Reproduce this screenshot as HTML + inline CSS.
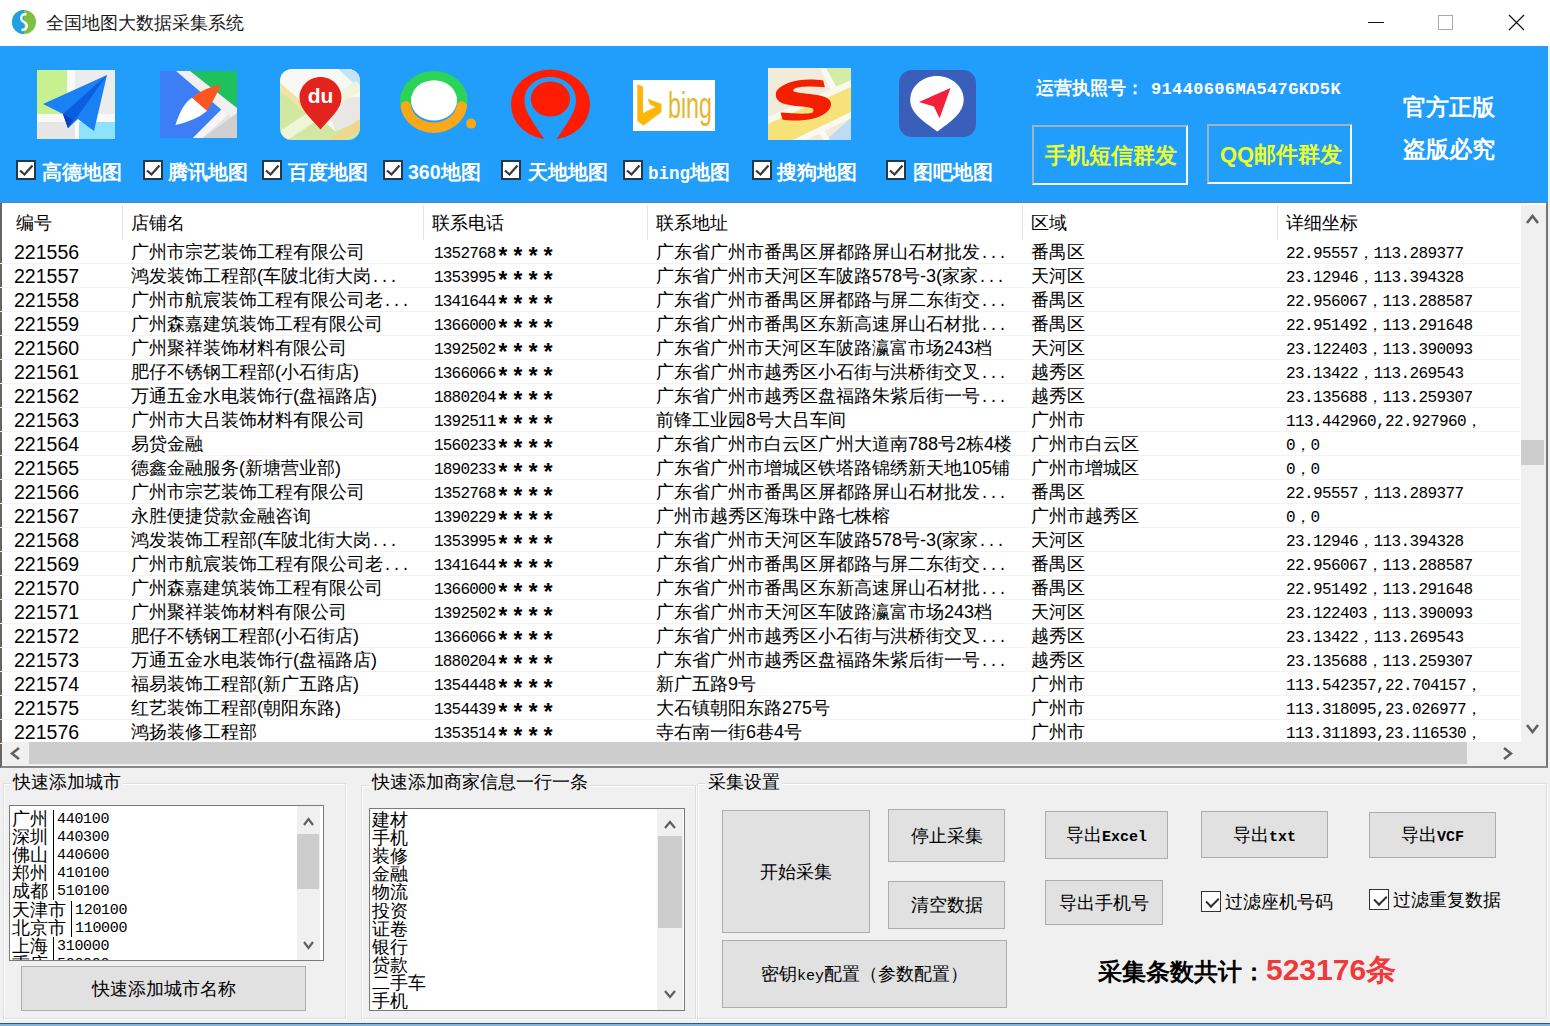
<!DOCTYPE html>
<html><head><meta charset="utf-8">
<style>
*{margin:0;padding:0;box-sizing:border-box}
html,body{width:1550px;height:1026px;overflow:hidden;background:#f0f0f0;font-family:"Liberation Sans",sans-serif;color:#000}
.a{position:absolute}
#title{left:0;top:0;width:1550px;height:46px;background:#fff}
#ttext{left:46px;top:12px;font-size:18px;line-height:22px;color:#1a1a1a;white-space:nowrap}
#blue{left:0;top:46px;width:1548px;height:157px;background:#219dfb}
#redge{left:1548px;top:46px;width:2px;height:157px;background:#e9eef8}
.lbl{position:absolute;top:160.5px;height:22px;font-size:19.5px;line-height:22px;font-weight:bold;color:#fff;white-space:nowrap}
.cb{position:absolute;top:160px;width:20px;height:19.5px;background:#fff;border:2px solid #24384c}
.cb svg{position:absolute;left:0;top:0}
/* table */
#tbl{left:0;top:203px;width:1548px;height:565px;background:#fff;border-left:2px solid #666;border-bottom:2px solid #888;border-right:2px solid #777;overflow:hidden}
.hd{position:absolute;top:9px;font-size:18px;line-height:22px;white-space:nowrap}
.hsep{position:absolute;top:2px;width:1px;height:35px;background:#e5e5e5}
.row{position:absolute;left:0;width:1520px;height:24px;border-bottom:1px solid #f3f3f3;white-space:nowrap}
.row span{position:absolute;top:1px;line-height:22px}
.c0{left:14px;font-size:19.5px}
.c1{left:131px;font-size:18px}
.c2{left:434px;font-size:16px;font-family:"Liberation Mono",monospace;top:3px!important;letter-spacing:-0.8px}
.c2 i{font-style:normal;font-size:23px;font-weight:bold;letter-spacing:1.3px;position:absolute;left:62px;top:5px;line-height:22px}
.row s{text-decoration:none;font-family:"Liberation Mono",monospace;font-size:15px;letter-spacing:0}
.c3{left:656px;font-size:18px}
.c4{left:1031px;font-size:18px}
.c5{left:1286px;font-size:16px;font-family:"Liberation Mono",monospace;top:3px!important;letter-spacing:-0.6px}
/* bottom */
.btn{position:absolute;background:#e1e1e1;border:1px solid #adadad;font-size:18px;display:flex;align-items:center;justify-content:center;white-space:nowrap}
.gb{position:absolute;border:1px solid #dedede;box-shadow:1px 1px 0 #fff, inset 1px 1px 0 #fff}
.gt{position:absolute;font-size:18px;line-height:22px;background:#f0f0f0;padding:0 2px;white-space:nowrap}
.li{position:absolute;left:2px;font-size:18px;line-height:18px;white-space:nowrap}
.li b{font-weight:normal;display:inline-block;width:1px;height:18px;background:#000;color:transparent;overflow:hidden;vertical-align:top;margin:0 3px 0 5px}
.li tt{font-family:"Liberation Mono",monospace;font-size:15px;letter-spacing:-0.3px;position:relative;top:-2px}
.cbw{width:20px;height:21px;border:1.5px solid #333;background:#fff}
.cbw:after{content:"";position:absolute;left:3px;top:2px;width:10px;height:6px;border-left:2.2px solid #333;border-bottom:2.2px solid #333;transform:rotate(-45deg) translate(-1px,3px)}
</style></head><body>
<div id="title" class="a">
  <svg class="a" style="left:11px;top:9px" width="26" height="26" viewBox="0 0 26 26">
    <circle cx="13" cy="13" r="12" fill="#7cc142"></circle>
    <path d="M13 1 A12 12 0 0 0 13 25 Z" fill="#1fa0e4"></path>
    <path d="M15.5 5 C9 5 9 11 13 13 C17 15 17 21 10.5 21" stroke="#fff" stroke-width="2.4" fill="none"></path>
  </svg>
  <div id="ttext" class="a" style="width: 198px; text-align: justify; text-align-last: justify;">全国地图大数据采集系统</div>
  <div class="a" style="left:1368px;top:22px;width:16px;height:1px;background:#111"></div>
  <div class="a" style="left:1438px;top:15px;width:15px;height:15px;border:1px solid #aaa"></div>
  <svg class="a" style="left:1508px;top:14px" width="17" height="17" viewBox="0 0 17 17"><path d="M1 1L16 16M16 1L1 16" stroke="#111" stroke-width="1.2"></path></svg>
</div>
<div id="blue" class="a"></div>
<div class="a" style="left:0;top:202px;width:1548px;height:1px;background:#5586b4"></div>
<div id="redge" class="a"></div>

<!-- toolbar icons -->
<svg class="a" style="left:37px;top:70px" width="78" height="69" viewBox="0 0 78 69">
  <rect width="78" height="69" fill="#ececec"></rect>
  <rect x="0" y="0" width="30" height="44" fill="#c7f090"></rect>
  <rect x="30" y="0" width="8" height="44" fill="#fafafa"></rect>
  <rect x="0" y="44" width="78" height="8" fill="#fafafa"></rect>
  <rect x="38" y="52" width="4" height="17" fill="#fafafa"></rect>
  <rect x="42" y="52" width="36" height="17" fill="#8ee2fb"></rect>
  <rect x="0" y="52" width="38" height="17" fill="#e6e6e6"></rect>
  <polygon points="6,34 70,5 57,61 41,49 31,58 26,44" fill="#1a80f6"></polygon>
  <polygon points="26,44 70,5 38,50 31,58" fill="#0b5ee0"></polygon>
  <polygon points="26,44 31,58 36,50" fill="#0a3fc0"></polygon>
</svg>
<svg class="a" style="left:160px;top:71px" width="77" height="67" viewBox="0 0 77 67">
  <rect width="77" height="67" fill="#3d7df6"></rect>
  <polygon points="30,0 77,0 77,37" fill="#1ec15c"></polygon>
  <polygon points="16,0 30,0 77,37 77,52 " fill="#f0f0f0"></polygon>
  <polygon points="77,52 77,67 33,67 62,38" fill="#e4e4e4"></polygon>
  <polygon points="77,42 77,67 43,67" fill="#cfcfcf"></polygon>
  <polygon points="62,38 68,44 42,67 33,67" fill="#f6f6f6"></polygon>
  <path d="M32 26.7 Q45 16 61 14 Q55 27 47 40 Z" fill="#ff5520"></path>
  <path d="M15.4 53.9 Q22 33 32 26.7 L47 40 Q35 50 15.4 53.9Z" fill="#ffffff"></path>
</svg>
<svg class="a" style="left:280px;top:69px" width="80" height="71" viewBox="0 0 80 71">
  <defs><clipPath id="bdc"><rect width="80" height="71" rx="12" ry="12"></rect></clipPath></defs>
  <g clip-path="url(#bdc)">
    <rect width="80" height="71" fill="#d2e8a2"></rect>
    <polygon points="0,0 80,0 80,52 55,62 30,40 0,14" fill="#f8f8f4"></polygon>
    <polygon points="0,14 30,40 27,45 0,22" fill="#f0e4a2"></polygon>
    <polygon points="45,30 80,28 80,52 55,62" fill="#e9e7e6"></polygon>
    <polygon points="58,0 80,0 80,20" fill="#c3e3f6"></polygon>
    <polygon points="0,62 76,12 80,16 80,22 8,71 0,71" fill="#eef5d8"></polygon>
    <polygon points="48,71 80,50 80,62 64,71" fill="#ecd98e"></polygon>
  </g>
  <path d="M40.5 8 C52 8 61.5 17 61.5 28.5 C61.5 40 52 47 40.5 60.5 C29 47 19.5 40 19.5 28.5 C19.5 17 29 8 40.5 8Z" fill="#e3241e"></path>
  <text x="40.5" y="34" font-family="Liberation Sans" font-weight="bold" font-size="21" fill="#fff" text-anchor="middle">du</text>
</svg>
<svg class="a" style="left:398px;top:69px" width="80" height="64" viewBox="0 0 80 64">
  <defs><clipPath id="c3t"><rect x="0" y="0" width="80" height="37"></rect></clipPath></defs>
  <ellipse cx="35.8" cy="31.6" rx="33.8" ry="29.6" fill="#2bd356" clip-path="url(#c3t)"></ellipse>
  <path d="M7.8 37.5 A28.3 24.8 0 0 0 63.8 37.5" stroke="#f9a817" stroke-width="10.5" stroke-linecap="round" fill="none"></path>
  <ellipse cx="36" cy="31.4" rx="23" ry="20.2" fill="#fff"></ellipse>
  <circle cx="73.1" cy="54.6" r="5" fill="#f9a817"></circle>
</svg>
<svg class="a" style="left:510px;top:69px" width="82" height="72" viewBox="0 0 82 72">
  <ellipse cx="40.5" cy="35.5" rx="39.5" ry="35" fill="#ff1c00"></ellipse>
  <path d="M40.3 8 C55 8 66 18 66 31 C66 42 60 50 46 71 L35 71 C21 50 14.5 42 14.5 31 C14.5 18 26 8 40.3 8Z" fill="#219dfb"></path>
  <ellipse cx="40.4" cy="30" rx="19.6" ry="17.6" fill="#ff1c00"></ellipse>
  <path d="M26 46 C30 55 34 62 36 71 L33 71 C29 60 25 52 22 46Z" fill="#ff1c00" opacity="0"></path>
</svg>
<svg class="a" style="left:633px;top:80px" width="82" height="51" viewBox="0 0 82 51">
  <rect width="82" height="51" fill="#fff"></rect>
  <path d="M4.3 4.3 L10 6.5 L10 33 L22.5 27 L17 24.5 L14.5 18.5 L28.5 24 L28.5 32 L10.5 45.5 L4.3 41 Z" fill="#ffb60a"></path>
  <text x="35" y="37.8" font-family="Liberation Sans" font-size="36" fill="#e8b530" textLength="44" lengthAdjust="spacingAndGlyphs">bing</text>
</svg>
<svg class="a" style="left:768px;top:68px" width="83" height="72" viewBox="0 0 83 72">
  <rect width="83" height="72" fill="#f2ebd9"></rect>
  <polygon points="58,0 83,0 83,17 70,22" fill="#d3eca6"></polygon>
  <polygon points="52,0 58,0 70,22 64,25" fill="#fbfaf2"></polygon>
  <polygon points="0,49 83,12 83,19 0,56" fill="#fbf9ef"></polygon>
  <polygon points="0,56 83,19 83,44 25,72 0,72" fill="#f7e27a"></polygon>
  <polygon points="25,72 83,44 83,50 38,72" fill="#fbfaf2"></polygon>
  <polygon points="58,72 83,50 83,72" fill="#bddcf3"></polygon>
  <polygon points="48,62 54,59 62,72 56,72" fill="#fbfaf2"></polygon>
  <path d="M55.2 12.6 C45 11 31 11 21 14.8 C14 17.5 8 21 7.8 26 C7.6 31 11 34 15 35.5 C22 38 38 38.5 43.8 40 C46 41 46 44 43.8 45 C36 46.5 22 45 12.6 44.6 L14.4 51.6 C22 53 36 53 44.6 50.8 C54 48.5 63 43 63 36 C63 31 57 28.5 49 27.1 C40 25.5 30 25 26 23.5 C24 22 26 20 31.5 19.2 C38 18.3 48 18.5 56.9 19.2 Z" fill="#f41e00"></path>
</svg>
<svg class="a" style="left:899px;top:70px" width="77" height="67" viewBox="0 0 77 67">
  <rect width="77" height="67" rx="13" ry="13" fill="#3a5fbb"></rect>
  <path d="M38 6 C52 6 64.7 16 64.7 30 C64.7 42 54 50 38.4 61.5 C22 50 11.2 42 11.2 30 C11.2 16 24 6 38 6Z" fill="#fff"></path>
  <polygon points="51.5,18 19.9,32 34.9,36.5 40.6,48.3" fill="#f2203a"></polygon>
</svg>
<div class="cb" style="left:16px"><svg width="16" height="15" viewBox="0 0 16 15"><path d="M2 8.5 L6.5 12.5 L14.5 3.5" stroke="#3a3a3a" stroke-width="2.3" fill="none"></path></svg></div><div class="lbl" style="left: 41.7px; width: 80px; text-align: justify; text-align-last: justify;">高德地图</div>
<div class="cb" style="left:143px"><svg width="16" height="15" viewBox="0 0 16 15"><path d="M2 8.5 L6.5 12.5 L14.5 3.5" stroke="#3a3a3a" stroke-width="2.3" fill="none"></path></svg></div><div class="lbl" style="left: 168px; width: 80px; text-align: justify; text-align-last: justify;">腾讯地图</div>
<div class="cb" style="left:261.5px"><svg width="16" height="15" viewBox="0 0 16 15"><path d="M2 8.5 L6.5 12.5 L14.5 3.5" stroke="#3a3a3a" stroke-width="2.3" fill="none"></path></svg></div><div class="lbl" style="left: 288px; width: 80px; text-align: justify; text-align-last: justify;">百度地图</div>
<div class="cb" style="left:383px"><svg width="16" height="15" viewBox="0 0 16 15"><path d="M2 8.5 L6.5 12.5 L14.5 3.5" stroke="#3a3a3a" stroke-width="2.3" fill="none"></path></svg></div><div class="lbl" style="left: 408px; width: 72.55px; text-align: justify; text-align-last: justify;">360地图</div>
<div class="cb" style="left:501px"><svg width="16" height="15" viewBox="0 0 16 15"><path d="M2 8.5 L6.5 12.5 L14.5 3.5" stroke="#3a3a3a" stroke-width="2.3" fill="none"></path></svg></div><div class="lbl" style="left: 528px; width: 80px; text-align: justify; text-align-last: justify;">天地地图</div>
<div class="cb" style="left:623px"><svg width="16" height="15" viewBox="0 0 16 15"><path d="M2 8.5 L6.5 12.5 L14.5 3.5" stroke="#3a3a3a" stroke-width="2.3" fill="none"></path></svg></div><div class="lbl" style="left: 648px; width: 82.02px; text-align: justify; text-align-last: justify;"><span style="font-family:'Liberation Mono',monospace;font-size:17.5px">bing</span>地图</div>
<div class="cb" style="left:752px"><svg width="16" height="15" viewBox="0 0 16 15"><path d="M2 8.5 L6.5 12.5 L14.5 3.5" stroke="#3a3a3a" stroke-width="2.3" fill="none"></path></svg></div><div class="lbl" style="left: 777.4px; width: 80px; text-align: justify; text-align-last: justify;">搜狗地图</div>
<div class="cb" style="left:885.5px"><svg width="16" height="15" viewBox="0 0 16 15"><path d="M2 8.5 L6.5 12.5 L14.5 3.5" stroke="#3a3a3a" stroke-width="2.3" fill="none"></path></svg></div><div class="lbl" style="left: 913.3px; width: 80px; text-align: justify; text-align-last: justify;">图吧地图</div>



<div class="a j" style="left: 1036px; top: 77px; font-size: 18px; line-height: 22px; font-weight: bold; color: rgb(255, 255, 255); white-space: nowrap; width: 304.94px; text-align: justify; text-align-last: justify;">运营执照号：<span style="font-family:'Liberation Mono',monospace;font-size:17px;letter-spacing:0.35px;margin-left:7px">91440606MA547GKD5K</span></div>
<div class="a" style="left:1032px;top:125px;width:156px;height:60px;border-top:2px solid #9fb3c5;border-left:2px solid #9fb3c5;border-bottom:2px solid #f4f8fc;border-right:2px solid #f4f8fc"></div>
<div class="a j" style="left: 1045px; top: 144px; font-size: 22px; line-height: 24px; font-weight: bold; color: rgb(236, 255, 42); white-space: nowrap; width: 132px; text-align: justify; text-align-last: justify;">手机短信群发</div>
<div class="a" style="left:1207px;top:124px;width:145px;height:60px;border-top:2px solid #9fb3c5;border-left:2px solid #9fb3c5;border-bottom:2px solid #f4f8fc;border-right:2px solid #f4f8fc"></div>
<div class="a j" style="left: 1220px; top: 143px; font-size: 22px; line-height: 24px; font-weight: bold; color: rgb(236, 255, 42); white-space: nowrap; width: 122.24px; text-align: justify; text-align-last: justify;">QQ邮件群发</div>
<div class="a j" style="left: 1403px; top: 95.5px; font-size: 22.5px; line-height: 24px; font-weight: bold; color: rgb(255, 255, 255); white-space: nowrap; width: 92px; text-align: justify; text-align-last: justify;">官方正版</div>
<div class="a j" style="left: 1403px; top: 137.5px; font-size: 22.5px; line-height: 24px; font-weight: bold; color: rgb(255, 255, 255); white-space: nowrap; width: 92px; text-align: justify; text-align-last: justify;">盗版必究</div>

<div id="tbl" class="a">
  <div class="hd" style="left: 14px; width: 36px; text-align: justify; text-align-last: justify;">编号</div>
  <div class="hsep" style="left:120px"></div>
  <div class="hd" style="left: 129px; width: 54px; text-align: justify; text-align-last: justify;">店铺名</div>
  <div class="hsep" style="left:421px"></div>
  <div class="hd" style="left: 430px; width: 72px; text-align: justify; text-align-last: justify;">联系电话</div>
  <div class="hsep" style="left:645px"></div>
  <div class="hd" style="left: 654px; width: 72px; text-align: justify; text-align-last: justify;">联系地址</div>
  <div class="hsep" style="left:1020px"></div>
  <div class="hd" style="left: 1029px; width: 36px; text-align: justify; text-align-last: justify;">区域</div>
  <div class="hsep" style="left:1275px"></div>
  <div class="hd" style="left: 1284px; width: 72px; text-align: justify; text-align-last: justify;">详细坐标</div>
</div>
<div class="a" style="left:0;top:203px;width:1548px;height:565px;overflow:hidden">
<div class="row" style="top:37px"><span class="c0">221556</span><span class="c1" style="width: 234px; text-align: justify; text-align-last: justify;">广州市宗艺装饰工程有限公司</span><span class="c2">1352768<i>****</i></span><span class="c3" style="width: 351.02px; text-align: justify; text-align-last: justify;">广东省广州市番禺区屏都路屏山石材批发<s>...</s></span><span class="c4" style="width: 54px; text-align: justify; text-align-last: justify;">番禺区</span><span class="c5" style="width: 177.44px; text-align: justify; text-align-last: justify;">22.95557，113.289377</span></div>
<div class="row" style="top:61px"><span class="c0">221557</span><span class="c1" style="width: 267.02px; text-align: justify; text-align-last: justify;">鸿发装饰工程部(车陂北街大岗<s>...</s></span><span class="c2">1353995<i>****</i></span><span class="c3" style="width: 349.05px; text-align: justify; text-align-last: justify;">广东省广州市天河区车陂路578号-3(家家<s>...</s></span><span class="c4" style="width: 54px; text-align: justify; text-align-last: justify;">天河区</span><span class="c5" style="width: 177.44px; text-align: justify; text-align-last: justify;">23.12946，113.394328</span></div>
<div class="row" style="top:85px"><span class="c0">221558</span><span class="c1" style="width: 279.02px; text-align: justify; text-align-last: justify;">广州市航宸装饰工程有限公司老<s>...</s></span><span class="c2">1341644<i>****</i></span><span class="c3" style="width: 351.02px; text-align: justify; text-align-last: justify;">广东省广州市番禺区屏都路与屏二东街交<s>...</s></span><span class="c4" style="width: 54px; text-align: justify; text-align-last: justify;">番禺区</span><span class="c5" style="width: 186.44px; text-align: justify; text-align-last: justify;">22.956067，113.288587</span></div>
<div class="row" style="top:109px"><span class="c0">221559</span><span class="c1" style="width: 252px; text-align: justify; text-align-last: justify;">广州森嘉建筑装饰工程有限公司</span><span class="c2">1366000<i>****</i></span><span class="c3" style="width: 351.02px; text-align: justify; text-align-last: justify;">广东省广州市番禺区东新高速屏山石材批<s>...</s></span><span class="c4" style="width: 54px; text-align: justify; text-align-last: justify;">番禺区</span><span class="c5" style="width: 186.44px; text-align: justify; text-align-last: justify;">22.951492，113.291648</span></div>
<div class="row" style="top:133px"><span class="c0">221560</span><span class="c1" style="width: 216px; text-align: justify; text-align-last: justify;">广州聚祥装饰材料有限公司</span><span class="c2">1392502<i>****</i></span><span class="c3" style="width: 336.05px; text-align: justify; text-align-last: justify;">广东省广州市天河区车陂路瀛富市场243档</span><span class="c4" style="width: 54px; text-align: justify; text-align-last: justify;">天河区</span><span class="c5" style="width: 186.44px; text-align: justify; text-align-last: justify;">23.122403，113.390093</span></div>
<div class="row" style="top:157px"><span class="c0">221561</span><span class="c1" style="width: 228px; text-align: justify; text-align-last: justify;">肥仔不锈钢工程部(小石街店)</span><span class="c2">1366066<i>****</i></span><span class="c3" style="width: 351.02px; text-align: justify; text-align-last: justify;">广东省广州市越秀区小石街与洪桥街交叉<s>...</s></span><span class="c4" style="width: 54px; text-align: justify; text-align-last: justify;">越秀区</span><span class="c5" style="width: 177.44px; text-align: justify; text-align-last: justify;">23.13422，113.269543</span></div>
<div class="row" style="top:181px"><span class="c0">221562</span><span class="c1" style="width: 246px; text-align: justify; text-align-last: justify;">万通五金水电装饰行(盘福路店)</span><span class="c2">1880204<i>****</i></span><span class="c3" style="width: 351.02px; text-align: justify; text-align-last: justify;">广东省广州市越秀区盘福路朱紫后街一号<s>...</s></span><span class="c4" style="width: 54px; text-align: justify; text-align-last: justify;">越秀区</span><span class="c5" style="width: 186.44px; text-align: justify; text-align-last: justify;">23.135688，113.259307</span></div>
<div class="row" style="top:205px"><span class="c0">221563</span><span class="c1" style="width: 234px; text-align: justify; text-align-last: justify;">广州市大吕装饰材料有限公司</span><span class="c2">1392511<i>****</i></span><span class="c3" style="width: 190.02px; text-align: justify; text-align-last: justify;">前锋工业园8号大吕车间</span><span class="c4" style="width: 54px; text-align: justify; text-align-last: justify;">广州市</span><span class="c5" style="width: 195.44px; text-align: justify; text-align-last: justify;">113.442960,22.927960，</span></div>
<div class="row" style="top:229px"><span class="c0">221564</span><span class="c1" style="width: 72px; text-align: justify; text-align-last: justify;">易贷金融</span><span class="c2">1560233<i>****</i></span><span class="c3" style="width: 356.07px; text-align: justify; text-align-last: justify;">广东省广州市白云区广州大道南788号2栋4楼</span><span class="c4" style="width: 108px; text-align: justify; text-align-last: justify;">广州市白云区</span><span class="c5" style="width: 33.41px; text-align: justify; text-align-last: justify;">0，0</span></div>
<div class="row" style="top:253px"><span class="c0">221565</span><span class="c1" style="width: 210px; text-align: justify; text-align-last: justify;">德鑫金融服务(新塘营业部)</span><span class="c2">1890233<i>****</i></span><span class="c3" style="width: 354.05px; text-align: justify; text-align-last: justify;">广东省广州市增城区铁塔路锦绣新天地105铺</span><span class="c4" style="width: 108px; text-align: justify; text-align-last: justify;">广州市增城区</span><span class="c5" style="width: 33.41px; text-align: justify; text-align-last: justify;">0，0</span></div>
<div class="row" style="top:277px"><span class="c0">221566</span><span class="c1" style="width: 234px; text-align: justify; text-align-last: justify;">广州市宗艺装饰工程有限公司</span><span class="c2">1352768<i>****</i></span><span class="c3" style="width: 351.02px; text-align: justify; text-align-last: justify;">广东省广州市番禺区屏都路屏山石材批发<s>...</s></span><span class="c4" style="width: 54px; text-align: justify; text-align-last: justify;">番禺区</span><span class="c5" style="width: 177.44px; text-align: justify; text-align-last: justify;">22.95557，113.289377</span></div>
<div class="row" style="top:301px"><span class="c0">221567</span><span class="c1" style="width: 180px; text-align: justify; text-align-last: justify;">永胜便捷贷款金融咨询</span><span class="c2">1390229<i>****</i></span><span class="c3" style="width: 234px; text-align: justify; text-align-last: justify;">广州市越秀区海珠中路七株榕</span><span class="c4" style="width: 108px; text-align: justify; text-align-last: justify;">广州市越秀区</span><span class="c5" style="width: 33.41px; text-align: justify; text-align-last: justify;">0，0</span></div>
<div class="row" style="top:325px"><span class="c0">221568</span><span class="c1" style="width: 267.02px; text-align: justify; text-align-last: justify;">鸿发装饰工程部(车陂北街大岗<s>...</s></span><span class="c2">1353995<i>****</i></span><span class="c3" style="width: 349.05px; text-align: justify; text-align-last: justify;">广东省广州市天河区车陂路578号-3(家家<s>...</s></span><span class="c4" style="width: 54px; text-align: justify; text-align-last: justify;">天河区</span><span class="c5" style="width: 177.44px; text-align: justify; text-align-last: justify;">23.12946，113.394328</span></div>
<div class="row" style="top:349px"><span class="c0">221569</span><span class="c1" style="width: 279.02px; text-align: justify; text-align-last: justify;">广州市航宸装饰工程有限公司老<s>...</s></span><span class="c2">1341644<i>****</i></span><span class="c3" style="width: 351.02px; text-align: justify; text-align-last: justify;">广东省广州市番禺区屏都路与屏二东街交<s>...</s></span><span class="c4" style="width: 54px; text-align: justify; text-align-last: justify;">番禺区</span><span class="c5" style="width: 186.44px; text-align: justify; text-align-last: justify;">22.956067，113.288587</span></div>
<div class="row" style="top:373px"><span class="c0">221570</span><span class="c1" style="width: 252px; text-align: justify; text-align-last: justify;">广州森嘉建筑装饰工程有限公司</span><span class="c2">1366000<i>****</i></span><span class="c3" style="width: 351.02px; text-align: justify; text-align-last: justify;">广东省广州市番禺区东新高速屏山石材批<s>...</s></span><span class="c4" style="width: 54px; text-align: justify; text-align-last: justify;">番禺区</span><span class="c5" style="width: 186.44px; text-align: justify; text-align-last: justify;">22.951492，113.291648</span></div>
<div class="row" style="top:397px"><span class="c0">221571</span><span class="c1" style="width: 216px; text-align: justify; text-align-last: justify;">广州聚祥装饰材料有限公司</span><span class="c2">1392502<i>****</i></span><span class="c3" style="width: 336.05px; text-align: justify; text-align-last: justify;">广东省广州市天河区车陂路瀛富市场243档</span><span class="c4" style="width: 54px; text-align: justify; text-align-last: justify;">天河区</span><span class="c5" style="width: 186.44px; text-align: justify; text-align-last: justify;">23.122403，113.390093</span></div>
<div class="row" style="top:421px"><span class="c0">221572</span><span class="c1" style="width: 228px; text-align: justify; text-align-last: justify;">肥仔不锈钢工程部(小石街店)</span><span class="c2">1366066<i>****</i></span><span class="c3" style="width: 351.02px; text-align: justify; text-align-last: justify;">广东省广州市越秀区小石街与洪桥街交叉<s>...</s></span><span class="c4" style="width: 54px; text-align: justify; text-align-last: justify;">越秀区</span><span class="c5" style="width: 177.44px; text-align: justify; text-align-last: justify;">23.13422，113.269543</span></div>
<div class="row" style="top:445px"><span class="c0">221573</span><span class="c1" style="width: 246px; text-align: justify; text-align-last: justify;">万通五金水电装饰行(盘福路店)</span><span class="c2">1880204<i>****</i></span><span class="c3" style="width: 351.02px; text-align: justify; text-align-last: justify;">广东省广州市越秀区盘福路朱紫后街一号<s>...</s></span><span class="c4" style="width: 54px; text-align: justify; text-align-last: justify;">越秀区</span><span class="c5" style="width: 186.44px; text-align: justify; text-align-last: justify;">23.135688，113.259307</span></div>
<div class="row" style="top:469px"><span class="c0">221574</span><span class="c1" style="width: 228px; text-align: justify; text-align-last: justify;">福易装饰工程部(新广五路店)</span><span class="c2">1354448<i>****</i></span><span class="c3" style="width: 100.02px; text-align: justify; text-align-last: justify;">新广五路9号</span><span class="c4" style="width: 54px; text-align: justify; text-align-last: justify;">广州市</span><span class="c5" style="width: 195.44px; text-align: justify; text-align-last: justify;">113.542357,22.704157，</span></div>
<div class="row" style="top:493px"><span class="c0">221575</span><span class="c1" style="width: 210px; text-align: justify; text-align-last: justify;">红艺装饰工程部(朝阳东路)</span><span class="c2">1354439<i>****</i></span><span class="c3" style="width: 174.05px; text-align: justify; text-align-last: justify;">大石镇朝阳东路275号</span><span class="c4" style="width: 54px; text-align: justify; text-align-last: justify;">广州市</span><span class="c5" style="width: 195.44px; text-align: justify; text-align-last: justify;">113.318095,23.026977，</span></div>
<div class="row" style="top:517px"><span class="c0">221576</span><span class="c1" style="width: 126px; text-align: justify; text-align-last: justify;">鸿扬装修工程部</span><span class="c2">1353514<i>****</i></span><span class="c3" style="width: 146.04px; text-align: justify; text-align-last: justify;">寺右南一街6巷4号</span><span class="c4" style="width: 54px; text-align: justify; text-align-last: justify;">广州市</span><span class="c5" style="width: 195.44px; text-align: justify; text-align-last: justify;">113.311893,23.116530，</span></div>
</div>


<!-- table scrollbars -->
<div class="a" style="left:1521px;top:205px;width:25px;height:537px;background:#f0f0f0"></div>
<svg class="a" style="left:1524.5px;top:214.0px" width="15" height="11" viewBox="0 0 15 11"><path d="M2 9 L7.5 2 L13 9" stroke="#606060" stroke-width="2.6" fill="none"></path></svg>
<svg class="a" style="left:1524.5px;top:722.5px" width="15" height="11" viewBox="0 0 15 11"><path d="M2 2 L7.5 9 L13 2" stroke="#606060" stroke-width="2.6" fill="none"></path></svg>
<div class="a" style="left:1521px;top:440px;width:23px;height:25px;background:#cdcdcd"></div>
<div class="a" style="left:2px;top:742px;width:1544px;height:24px;background:#f0f0f0"></div>
<svg class="a" style="left:9.5px;top:746.0px" width="11" height="15" viewBox="0 0 11 15"><path d="M9 2 L2 7.5 L9 13" stroke="#606060" stroke-width="2.6" fill="none"></path></svg>
<svg class="a" style="left:1501.5px;top:746.0px" width="11" height="15" viewBox="0 0 11 15"><path d="M2 2 L9 7.5 L2 13" stroke="#606060" stroke-width="2.6" fill="none"></path></svg>
<div class="a" style="left:29px;top:742px;width:1438px;height:22px;background:#cdcdcd"></div>

<!-- bottom panel -->
<div class="gb" style="left:3px;top:783px;width:343px;height:236px"></div>
<div class="gt" style="left: 11px; top: 771px; width: 112px; text-align: justify; text-align-last: justify;">快速添加城市</div>
<div class="a" style="left:9px;top:805px;width:315px;height:156px;background:#fff;border:1px solid #7a7a7a;overflow:hidden">
<div class="li" style="top: 4px; width: 97.22px; text-align: justify; text-align-last: justify;">广州<b>|</b><tt>440100</tt></div><div class="li" style="top: 22.1px; width: 97.22px; text-align: justify; text-align-last: justify;">深圳<b>|</b><tt>440300</tt></div><div class="li" style="top: 40.2px; width: 97.22px; text-align: justify; text-align-last: justify;">佛山<b>|</b><tt>440600</tt></div><div class="li" style="top: 58.3px; width: 97.22px; text-align: justify; text-align-last: justify;">郑州<b>|</b><tt>410100</tt></div><div class="li" style="top: 76.4px; width: 97.22px; text-align: justify; text-align-last: justify;">成都<b>|</b><tt>510100</tt></div><div class="li" style="top: 94.5px; width: 115.22px; text-align: justify; text-align-last: justify;">天津市<b>|</b><tt>120100</tt></div><div class="li" style="top: 112.6px; width: 115.22px; text-align: justify; text-align-last: justify;">北京市<b>|</b><tt>110000</tt></div><div class="li" style="top: 130.7px; width: 97.22px; text-align: justify; text-align-last: justify;">上海<b>|</b><tt>310000</tt></div><div class="li" style="top: 148.8px; width: 97.22px; text-align: justify; text-align-last: justify;">重庆<b>|</b><tt>500000</tt></div>
</div>
<div class="a" style="left:297px;top:806px;width:23px;height:154px;background:#f0f0f0"></div>
<svg class="a" style="left:302.0px;top:817.0px" width="13" height="10" viewBox="0 0 13 10"><path d="M2 8 L6.5 2 L11 8" stroke="#606060" stroke-width="2.2" fill="none"></path></svg>
<svg class="a" style="left:302.0px;top:939.5px" width="13" height="10" viewBox="0 0 13 10"><path d="M2 2 L6.5 8 L11 2" stroke="#606060" stroke-width="2.2" fill="none"></path></svg>
<div class="a" style="left:297px;top:834px;width:22px;height:55px;background:#cdcdcd"></div>
<div class="btn" style="left:21px;top:966px;width:285px;height:45px"><span class="j" style="width: 144px; text-align: justify; text-align-last: justify;">快速添加城市名称</span></div>

<div class="gb" style="left:361px;top:785px;width:335px;height:234px"></div>
<div class="gt" style="left: 370px; top: 771px; width: 220px; text-align: justify; text-align-last: justify;">快速添加商家信息一行一条</div>
<div class="a" style="left:369px;top:808px;width:316px;height:203px;background:#fff;border:1px solid #7a7a7a;overflow:hidden">
<div class="li" style="top: 2px; width: 36px; text-align: justify; text-align-last: justify;">建材</div><div class="li" style="top: 20.1px; width: 36px; text-align: justify; text-align-last: justify;">手机</div><div class="li" style="top: 38.2px; width: 36px; text-align: justify; text-align-last: justify;">装修</div><div class="li" style="top: 56.3px; width: 36px; text-align: justify; text-align-last: justify;">金融</div><div class="li" style="top: 74.4px; width: 36px; text-align: justify; text-align-last: justify;">物流</div><div class="li" style="top: 92.5px; width: 36px; text-align: justify; text-align-last: justify;">投资</div><div class="li" style="top: 110.6px; width: 36px; text-align: justify; text-align-last: justify;">证卷</div><div class="li" style="top: 128.7px; width: 36px; text-align: justify; text-align-last: justify;">银行</div><div class="li" style="top: 146.8px; width: 36px; text-align: justify; text-align-last: justify;">贷款</div><div class="li" style="top: 164.9px; width: 54px; text-align: justify; text-align-last: justify;">二手车</div><div class="li" style="top: 183px; width: 36px; text-align: justify; text-align-last: justify;">手机</div>
</div>
<div class="a" style="left:657px;top:809px;width:26px;height:201px;background:#f0f0f0"></div>
<svg class="a" style="left:663.0px;top:820.0px" width="14" height="10" viewBox="0 0 14 10"><path d="M2 8 L7.0 2 L12 8" stroke="#606060" stroke-width="2.2" fill="none"></path></svg>
<svg class="a" style="left:663.0px;top:989.0px" width="14" height="10" viewBox="0 0 14 10"><path d="M2 2 L7.0 8 L12 2" stroke="#606060" stroke-width="2.2" fill="none"></path></svg>
<div class="a" style="left:658px;top:836px;width:24px;height:92px;background:#cdcdcd"></div>

<div class="gb" style="left:697px;top:783px;width:850px;height:236px"></div>
<div class="gt" style="left: 706px; top: 771px; width: 76px; text-align: justify; text-align-last: justify;">采集设置</div>
<div class="btn" style="left:722px;top:810px;width:148px;height:123px"><span class="j" style="width: 72px; text-align: justify; text-align-last: justify;">开始采集</span></div>
<div class="btn" style="left:888px;top:809px;width:117px;height:53px"><span class="j" style="width: 72px; text-align: justify; text-align-last: justify;">停止采集</span></div>
<div class="btn" style="left:888px;top:881px;width:117px;height:48px"><span class="j" style="width: 72px; text-align: justify; text-align-last: justify;">清空数据</span></div>
<div class="btn" style="left:722px;top:940px;width:285px;height:68px"><span class="j" style="width: 207.02px; text-align: justify; text-align-last: justify;">密钥<b style="font-family:'Liberation Mono',monospace;font-size:15px;font-weight:normal">key</b>配置（参数配置）</span></div>
<div class="btn" style="left:1045px;top:811px;width:123px;height:48px"><span class="j" style="width: 81.02px; text-align: justify; text-align-last: justify;">导出<b style="font-family:'Liberation Mono',monospace;font-size:15px;font-weight:bold">Excel</b></span></div>
<div class="btn" style="left:1201px;top:811px;width:127px;height:47px"><span class="j" style="width: 63.02px; text-align: justify; text-align-last: justify;">导出<b style="font-family:'Liberation Mono',monospace;font-size:15px;font-weight:bold">txt</b></span></div>
<div class="btn" style="left:1369px;top:812px;width:127px;height:46px"><span class="j" style="width: 63.02px; text-align: justify; text-align-last: justify;">导出<b style="font-family:'Liberation Mono',monospace;font-size:15px;font-weight:bold">VCF</b></span></div>
<div class="btn" style="left:1045px;top:880px;width:118px;height:45px"><span class="j" style="width: 90px; text-align: justify; text-align-last: justify;">导出手机号</span></div>
<div class="a cbw" style="left:1201px;top:891px"></div>
<div class="a j" style="left: 1225px; top: 891px; font-size: 18px; line-height: 22px; white-space: nowrap; width: 108px; text-align: justify; text-align-last: justify;">过滤座机号码</div>
<div class="a cbw" style="left:1369px;top:889px"></div>
<div class="a j" style="left: 1393px; top: 889px; font-size: 18px; line-height: 22px; white-space: nowrap; width: 108px; text-align: justify; text-align-last: justify;">过滤重复数据</div>
<div class="a j" style="left: 1098px; top: 955px; font-size: 24px; line-height: 30px; font-weight: bold; white-space: nowrap; width: 298.11px; text-align: justify; text-align-last: justify;">采集条数共计：<span style="color:#ee3a3a;font-size:30px">523176条</span></div>
<div class="a" style="left:0;top:1023px;width:1550px;height:1px;background:#2d5876"></div><div class="a" style="left:0;top:1024px;width:1550px;height:2px;background:#86b3d6"></div>


</body></html>
